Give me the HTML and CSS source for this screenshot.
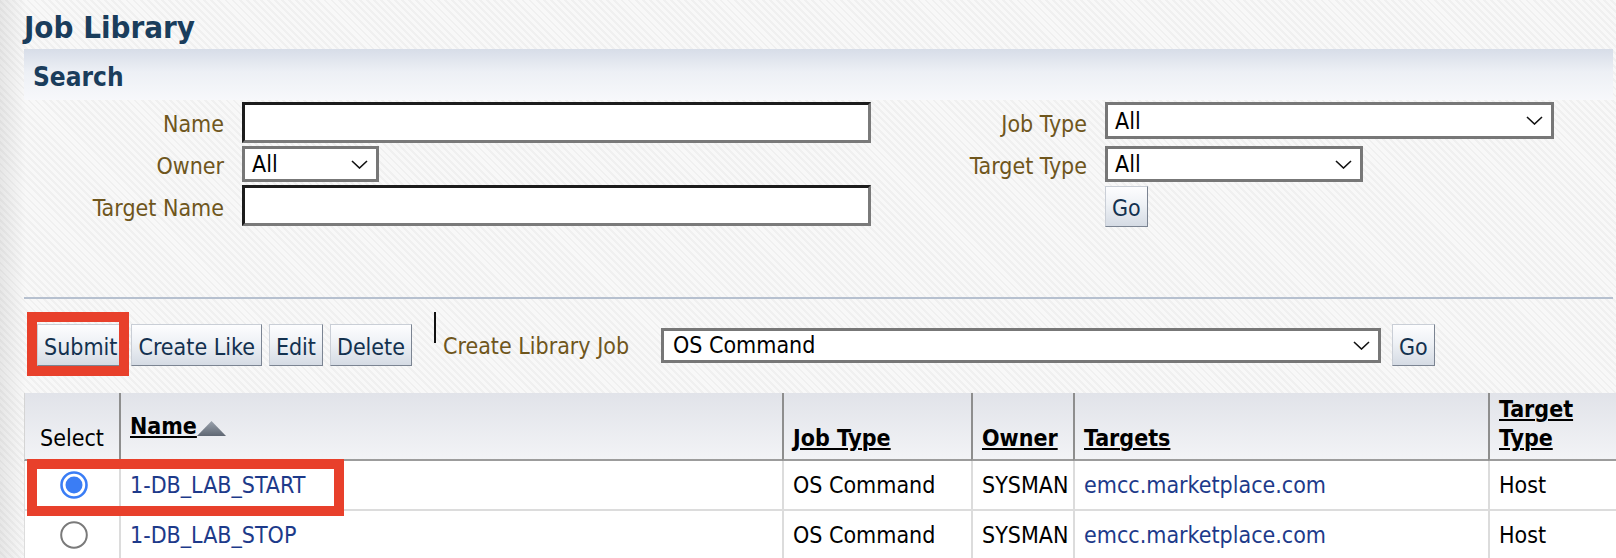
FILE: index.html
```html
<!DOCTYPE html>
<html lang="en">
<head>
<meta charset="utf-8">
<title>Job Library</title>
<link rel="stylesheet" href="styles.css">
</head>
<body>
<div class="page">
  <h1 class="title">Job Library</h1>
  <div class="section-head">Search</div>

  <div class="search-grid">
    <label class="lbl">Name</label>
    <input class="text-in" type="text">
    <label class="lbl">Job Type</label>
    <div class="select sel-jobtype"><span>All</span><svg class="chev" width="17" height="9" viewBox="0 0 17 9"><path d="M1 1 L8.5 8 L16 1" fill="none" stroke="#111" stroke-width="1.6"/></svg></div>

    <label class="lbl">Owner</label>
    <div class="select sel-owner"><span>All</span><svg class="chev" width="17" height="9" viewBox="0 0 17 9"><path d="M1 1 L8.5 8 L16 1" fill="none" stroke="#111" stroke-width="1.6"/></svg></div>
    <label class="lbl">Target Type</label>
    <div class="select sel-ttype"><span>All</span><svg class="chev" width="17" height="9" viewBox="0 0 17 9"><path d="M1 1 L8.5 8 L16 1" fill="none" stroke="#111" stroke-width="1.6"/></svg></div>

    <label class="lbl">Target Name</label>
    <input class="text-in" type="text">
    <span></span>
    <button class="btn btn-go-search">Go</button>
  </div>

  <div class="separator"></div>

  <div class="toolbar">
    <button class="btn">Submit</button>
    <button class="btn">Create Like</button>
    <button class="btn">Edit</button>
    <button class="btn">Delete</button>
    <span class="vbar"></span>
    <span class="lbl2">Create Library Job</span>
    <div class="select sel-create"><span>OS Command</span><svg class="chev" width="17" height="9" viewBox="0 0 17 9"><path d="M1 1 L8.5 8 L16 1" fill="none" stroke="#111" stroke-width="1.6"/></svg></div>
    <button class="btn">Go</button>
    <span class="annot annot-submit"></span>
  </div>

  <div class="table-wrap">
    <table class="jobs">
      <colgroup>
        <col class="c-select">
        <col class="c-name">
        <col class="c-jobtype">
        <col class="c-owner">
        <col class="c-targets">
        <col class="c-ttype">
      </colgroup>
      <thead>
        <tr>
          <th class="th-select">Select</th>
          <th class="th-name"><a class="sort-link">Name</a><svg class="sort-tri" width="29" height="15" viewBox="0 0 29 15"><defs><linearGradient id="tg" x1="0" y1="0" x2="0" y2="1"><stop offset="0" stop-color="#9aa2ad"/><stop offset="1" stop-color="#5f6773"/></linearGradient></defs><polygon points="14.5,0 29,15 0,15" fill="url(#tg)"/></svg></th>
          <th><a class="sort-link">Job Type</a></th>
          <th><a class="sort-link">Owner</a></th>
          <th><a class="sort-link">Targets</a></th>
          <th class="th-wrap"><a class="sort-link">Target Type</a></th>
        </tr>
      </thead>
      <tbody>
        <tr>
          <td class="td-select"><svg width="28" height="28" viewBox="0 0 28 28"><circle cx="14" cy="14" r="12.5" fill="#fff" stroke="#3a7df5" stroke-width="2.6"/><circle cx="14" cy="14" r="8.5" fill="#3a7df5"/></svg></td>
          <td><a class="link">1-DB_LAB_START</a></td>
          <td>OS Command</td>
          <td>SYSMAN</td>
          <td><a class="link">emcc.marketplace.com</a></td>
          <td>Host</td>
        </tr>
        <tr>
          <td class="td-select"><svg width="28" height="28" viewBox="0 0 28 28"><circle cx="14" cy="14" r="12.8" fill="#fff" stroke="#7a7a7a" stroke-width="2"/></svg></td>
          <td><a class="link">1-DB_LAB_STOP</a></td>
          <td>OS Command</td>
          <td>SYSMAN</td>
          <td><a class="link">emcc.marketplace.com</a></td>
          <td>Host</td>
        </tr>
      </tbody>
    </table>
    <span class="annot annot-row"></span>
  </div>
</div>
</body>
</html>
```

FILE: styles.css
```css
html, body {
  margin: 0;
  padding: 0;
  overflow: hidden;
}

body {
  width: 1616px;
  height: 558px;
  font-family: "DejaVu Sans Condensed", "DejaVu Sans", sans-serif;
  font-stretch: condensed;
  font-size: 23px;
  color: #000;
  background:
    linear-gradient(to right, rgba(0, 0, 0, 0.07) 0, rgba(0, 0, 0, 0) 26px),
    repeating-linear-gradient(45deg, #f8f8f8 0 3px, #f0f0f0 3px 5px);
}

.page {
  padding: 0 3px 0 24px;
}

.title {
  margin: 0;
  padding-top: 6px;
  height: 43px;
  line-height: 43px;
  font-size: 31px;
  font-weight: bold;
  color: #1a3d5c;
}

.section-head {
  height: 46px;
  padding: 5px 0 0 9px;
  line-height: 46px;
  font-size: 26px;
  font-weight: bold;
  color: #1a3d5c;
  background: linear-gradient(#d7dde8 0%, #edf0f5 45%, #f7f8fb 100%);
}

.search-grid {
  display: grid;
  grid-template-columns: 200px 629px 198px auto;
  grid-template-rows: 41px 36px 42px;
  column-gap: 18px;
  row-gap: 3px;
  margin-top: 2px;
}

.lbl {
  text-align: right;
  color: #6f561c;
  align-self: center;
  padding-top: 3px;
}

.text-in {
  box-sizing: border-box;
  width: 629px;
  height: 41px;
  margin: 0;
  padding: 0 6px;
  border: 3px solid;
  border-color: #1c1c1c #7a7a7a #7a7a7a #1c1c1c;
  background: #fff;
  align-self: start;
  font: inherit;
}

.select {
  box-sizing: border-box;
  display: flex;
  align-items: center;
  justify-content: space-between;
  padding: 0 8px 0 7px;
  border: 3px solid #777;
  background: #fff;
  color: #000;
}

.chev {
  flex: none;
}

.sel-jobtype {
  width: 449px;
  height: 37px;
  align-self: start;
}

.sel-owner {
  width: 137px;
  height: 36px;
}

.sel-ttype {
  width: 258px;
  height: 36px;
}

.btn {
  box-sizing: border-box;
  display: inline-flex;
  align-items: center;
  height: 42px;
  margin: 0 7px 0 0;
  padding: 3px 6px 0;
  border: 1px solid;
  border-color: #c9ced6 #7b8492 #7b8492 #c9ced6;
  background: linear-gradient(#fdfdfe 0%, #eef1f5 45%, #d5dbe4 100%);
  font: inherit;
  color: #13314f;
}

.btn-go-search {
  height: 41px;
  align-self: end;
  justify-self: start;
  margin: 0;
}

.separator {
  margin-top: 70px;
  height: 2px;
  background: #b6c0cf;
}

.toolbar {
  position: relative;
  display: flex;
  align-items: center;
  height: 42px;
  margin-top: 25px;
  padding-left: 13px;
}

.vbar {
  align-self: flex-start;
  width: 2px;
  height: 31px;
  margin: -12px 7px 0 15px;
  background: #111;
}

.lbl2 {
  width: 218px;
  padding-top: 2px;
  color: #6f561c;
  white-space: nowrap;
}

.sel-create {
  width: 720px;
  height: 35px;
  padding-left: 9px;
  margin-right: 11px;
}

.annot {
  position: absolute;
  box-sizing: border-box;
  border: 10px solid #e8402b;
}

.annot-submit {
  left: 3px;
  top: -12px;
  width: 102px;
  height: 64px;
}

.table-wrap {
  position: relative;
  margin-top: 27px;
}

.jobs {
  border-collapse: separate;
  border-spacing: 0;
  table-layout: fixed;
  width: 1604px;
}

.c-select { width: 95px; }
.c-name { width: 663px; }
.c-jobtype { width: 189px; }
.c-owner { width: 102px; }
.c-targets { width: 415px; }
.c-ttype { width: 140px; }

.jobs th {
  box-sizing: border-box;
  height: 68px;
  padding: 0 4px 6px 9px;
  vertical-align: bottom;
  text-align: left;
  line-height: 29px;
  font-weight: bold;
  white-space: nowrap;
  border-left: 2px solid #8e8e8e;
  border-bottom: 2px solid #9c9c9c;
  background: linear-gradient(#e1e3e9, #f2f3f6);
}

.jobs th.th-select {
  border-left: 1px solid #d4d4d4;
  padding-left: 4px;
  text-align: center;
  font-weight: normal;
}

.jobs th.th-name {
  padding-bottom: 18px;
}

.jobs th.th-wrap {
  white-space: normal;
}

.sort-link {
  color: #000;
  text-decoration: underline;
  text-decoration-thickness: 2px;
  text-underline-offset: 2px;
}

.sort-tri {
  vertical-align: -2px;
}

.jobs td {
  box-sizing: border-box;
  height: 50px;
  padding: 0 4px 0 9px;
  vertical-align: middle;
  white-space: nowrap;
  border-left: 2px solid #dcdcdc;
  border-bottom: 2px solid #dcdcdc;
  background: #fff;
}

.jobs td.td-select {
  border-left: 1px solid #dcdcdc;
  padding: 4px 0 0 4px;
  text-align: center;
}

.link {
  color: #1d3a8a;
  text-decoration: none;
}

.annot-row {
  left: 3px;
  top: 66px;
  width: 317px;
  height: 57px;
}
```
